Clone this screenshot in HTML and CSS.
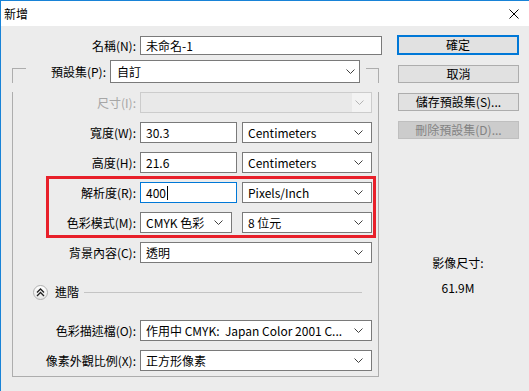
FILE: index.html
```html
<!DOCTYPE html>
<html lang="zh-Hant">

<head>
    <meta charset="UTF-8" />
    <title>新增</title>
    <link rel="stylesheet" href="styles.css">
</head>

<body>
    <div class="window">
        <div class="titlebar">
            <span class="title">新增</span>
            <svg class="close" width="10" height="10" viewBox="0 0 10 10">
                <path d="M0.5 0.5 L9.5 9.5 M9.5 0.5 L0.5 9.5" stroke="#000" stroke-width="1" />
            </svg>
        </div>

        <div class="dialog">
            <div class="left">
                <div class="row name-row">
                    <label class="lbl lbl-top">名稱(N):</label>
                    <div class="field field-name">未命名-1</div>
                </div>

                <div class="group">
                    <div class="group-head">
                        <span class="edge edge-l"></span>
                        <label class="lbl lbl-preset">預設集(P):</label>
                        <div class="select select-preset">
                            <span>自訂</span>
                            <svg class="chev" width="9" height="5" viewBox="0 0 9 5"><path d="M0.5 0.5 L4.5 4.5 L8.5 0.5" /></svg>
                        </div>
                        <span class="edge edge-r"></span>
                    </div>

                    <div class="group-body">
                        <div class="row">
                            <label class="lbl lbl-off">尺寸(I):</label>
                            <div class="select select-full select-off">
                                <span class="off-fill"></span>
                                <svg class="chev" width="9" height="5" viewBox="0 0 9 5"><path d="M0.5 0.5 L4.5 4.5 L8.5 0.5" /></svg>
                            </div>
                        </div>

                        <div class="row">
                            <label class="lbl">寬度(W):</label>
                            <div class="field field-num">30.3</div>
                            <div class="select select-unit">
                                <span>Centimeters</span>
                                <svg class="chev" width="9" height="5" viewBox="0 0 9 5"><path d="M0.5 0.5 L4.5 4.5 L8.5 0.5" /></svg>
                            </div>
                        </div>

                        <div class="row">
                            <label class="lbl">高度(H):</label>
                            <div class="field field-num">21.6</div>
                            <div class="select select-unit">
                                <span>Centimeters</span>
                                <svg class="chev" width="9" height="5" viewBox="0 0 9 5"><path d="M0.5 0.5 L4.5 4.5 L8.5 0.5" /></svg>
                            </div>
                        </div>

                        <div class="mark">
                            <div class="row">
                                <label class="lbl lbl-mark">解析度(R):</label>
                                <div class="field field-num field-focus">400<span class="caret"></span></div>
                                <div class="select select-unit">
                                    <span>Pixels/Inch</span>
                                    <svg class="chev" width="9" height="5" viewBox="0 0 9 5"><path d="M0.5 0.5 L4.5 4.5 L8.5 0.5" /></svg>
                                </div>
                            </div>
                            <div class="row">
                                <label class="lbl lbl-mark">色彩模式(M):</label>
                                <div class="select select-mode">
                                    <span>CMYK 色彩</span>
                                    <svg class="chev" width="9" height="5" viewBox="0 0 9 5"><path d="M0.5 0.5 L4.5 4.5 L8.5 0.5" /></svg>
                                </div>
                                <div class="select select-unit select-bits">
                                    <span>8 位元</span>
                                    <svg class="chev" width="9" height="5" viewBox="0 0 9 5"><path d="M0.5 0.5 L4.5 4.5 L8.5 0.5" /></svg>
                                </div>
                            </div>
                        </div>

                        <div class="row row-after-mark">
                            <label class="lbl">背景內容(C):</label>
                            <div class="select select-full">
                                <span>透明</span>
                                <svg class="chev" width="9" height="5" viewBox="0 0 9 5"><path d="M0.5 0.5 L4.5 4.5 L8.5 0.5" /></svg>
                            </div>
                        </div>

                        <div class="adv-row">
                            <span class="adv-btn">
                                <svg width="9" height="9" viewBox="0 0 9 9"><path d="M1 4.5 L4.5 1 L8 4.5 M1 8 L4.5 4.5 L8 8" /></svg>
                            </span>
                            <span class="adv-text">進階</span>
                            <span class="adv-line"></span>
                        </div>

                        <div class="row row-after-adv">
                            <label class="lbl">色彩描述檔(O):</label>
                            <div class="select select-full">
                                <span>作用中 CMYK:&nbsp; Japan Color 2001 C...</span>
                                <svg class="chev" width="9" height="5" viewBox="0 0 9 5"><path d="M0.5 0.5 L4.5 4.5 L8.5 0.5" /></svg>
                            </div>
                        </div>

                        <div class="row">
                            <label class="lbl">像素外觀比例(X):</label>
                            <div class="select select-full">
                                <span>正方形像素</span>
                                <svg class="chev" width="9" height="5" viewBox="0 0 9 5"><path d="M0.5 0.5 L4.5 4.5 L8.5 0.5" /></svg>
                            </div>
                        </div>
                    </div>
                </div>
            </div>

            <div class="right">
                <div class="btn btn-default">確定</div>
                <div class="btn">取消</div>
                <div class="btn">儲存預設集(S)...</div>
                <div class="btn btn-off">刪除預設集(D)...</div>

                <div class="info">
                    <div class="info-label">影像尺寸:</div>
                    <div class="info-value">61.9M</div>
                </div>
            </div>
        </div>
    </div>
</body>

</html>
```

FILE: styles.css
```css
body {
    margin: 0;
    font-family: "Noto Sans CJK TC", "Noto Sans", sans-serif;
    font-size: 12px;
    color: #000;
    background: #ececec;
}

.window {
    width: 529px;
    height: 391px;
    box-sizing: border-box;
    border-top: 1px solid #1883d7;
    border-left: 1px solid #1883d7;
    background: #ececec;
    overflow: hidden;
}

.titlebar {
    height: 25px;
    background: #fff;
    display: flex;
    align-items: center;
    justify-content: space-between;
    padding: 0 10px 0 3px;
}

.title {
    line-height: 1;
}

.close {
    display: block;
}

.dialog {
    display: flex;
    align-items: flex-start;
}

.left {
    width: 396px;
}

.row {
    display: flex;
    align-items: center;
    height: 21px;
    margin-top: 9px;
}

.lbl {
    width: 123px;
    flex: none;
    text-align: right;
    margin-right: 4px;
    line-height: 1;
    white-space: nowrap;
}

.lbl-top {
    width: 135px;
}

.lbl-off {
    color: #a6a6a6;
}

.lbl-mark {
    width: 87px;
}

.name-row {
    margin-top: 10px;
    height: 19px;
}

.field,
.select {
    height: 100%;
    box-sizing: border-box;
    background: #fff;
    border: 1px solid #7a7a7a;
    display: flex;
    align-items: center;
    padding-left: 5px;
    line-height: 1;
    white-space: nowrap;
}

.field-name {
    width: 242px;
}

.field-num {
    width: 97px;
}

.field-focus {
    border-color: #0078d7;
}

.caret {
    display: inline-block;
    width: 1px;
    height: 14px;
    background: #000;
    margin-left: 1px;
}

.select {
    justify-content: space-between;
    padding-right: 8px;
}

.chev {
    flex: none;
    fill: none;
    stroke: #404040;
    stroke-width: 1;
}

.select-full {
    width: 232px;
}

.select-unit {
    width: 130px;
    margin-left: 5px;
}

.select-mode {
    width: 92px;
}

.select-bits {
    margin-left: 10px;
}

.select-off {
    border-color: #cccccc;
    background: #f3f3f3;
    padding: 0 7px 0 0;
}

.select-off .off-fill {
    align-self: stretch;
    width: 211px;
    background: #e9e9e9;
}

.select-off .chev {
    stroke: #b4b4b4;
}

/* group box */
.group {
    margin-left: 11px;
    margin-top: 5px;
    width: 367px;
}

.group-head {
    display: flex;
    align-items: center;
    height: 23px;
}

.edge {
    align-self: stretch;
    margin-top: 8px;
    flex: none;
    box-sizing: border-box;
    border-top: 1px solid #adadad;
}

.edge-l {
    width: 14px;
    border-left: 1px solid #adadad;
}

.edge-r {
    width: 13px;
    margin-left: 6px;
    border-right: 1px solid #adadad;
}

.lbl-preset {
    width: 80px;
}

.select-preset {
    width: 250px;
    padding-left: 6px;
    padding-right: 4px;
}

.group-body {
    border: 1px solid #adadad;
    border-top: none;
    padding-bottom: 5px;
}

.mark {
    margin: 3px 0 0 33px;
    width: 330px;
    box-sizing: border-box;
    border: 3px solid #e8202a;
    padding: 3px 0 2px;
}

.mark .row:first-child {
    margin-top: 0;
}

.row-after-mark {
    margin-top: 4px;
}

.adv-row {
    display: flex;
    align-items: center;
    height: 18px;
    margin-top: 20px;
    padding-left: 20px;
    margin-right: 16px;
}

.adv-btn {
    width: 15px;
    height: 15px;
    box-sizing: border-box;
    border-radius: 50%;
    border: 1px solid #b0b0b0;
    background: linear-gradient(#ffffff, #e6e6e6);
    display: flex;
    align-items: center;
    justify-content: center;
}

.adv-btn svg {
    fill: none;
    stroke: #202020;
    stroke-width: 1.3;
}

.adv-text {
    margin-left: 7px;
    line-height: 1;
}

.adv-line {
    flex: 1;
    height: 1px;
    background: #c4c4c4;
    margin-left: 5px;
}

.row-after-adv {
    margin-top: 19px;
}

/* buttons */
.right {
    width: 122px;
    margin-top: 9px;
}

.btn {
    width: 121px;
    height: 18px;
    margin: 10px 0 0 1px;
    box-sizing: border-box;
    background: #e1e1e1;
    border: 1px solid #adadad;
    display: flex;
    align-items: center;
    justify-content: center;
    line-height: 1;
}

.btn-default {
    width: 122px;
    height: 20px;
    margin: 0;
    border: 2px solid #0078d7;
}

.btn-off {
    background: #cccccc;
    border-color: #bfbfbf;
    color: #838383;
}

.info {
    margin-top: 116px;
    text-align: center;
    line-height: 16px;
}

.info-value {
    margin-top: 9px;
}
```
